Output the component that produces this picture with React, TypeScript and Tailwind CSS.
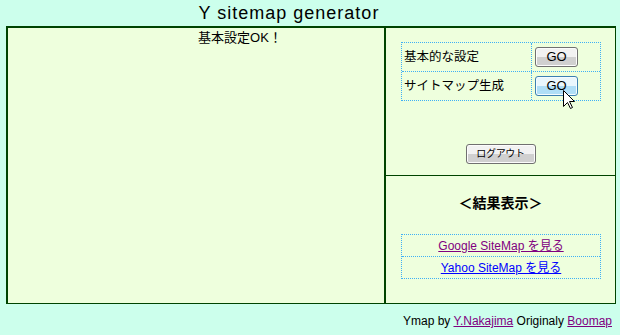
import React from "react";

const FONT = { fontFamily: '"Liberation Sans", "Noto Sans CJK JP", sans-serif' };

function GrayButton({ label, className = "" }: { label: string; className?: string }) {
  return (
    <div
      className={
        "flex items-center justify-center rounded-[3px] border border-[#707070] bg-gradient-to-b from-[#f2f2f2] from-50% to-[#d0d0d0] to-50% leading-[14px] text-black shadow-[inset_0_0_0_1px_#fcfcfc] " +
        className
      }
    >
      {label}
    </div>
  );
}

function BlueButton({ label, className = "" }: { label: string; className?: string }) {
  return (
    <div
      className={
        "flex items-center justify-center rounded-[3px] border border-[#3c7fb1] bg-gradient-to-b from-[#eaf6fd] from-50% to-[#b0def7] to-50% leading-[14px] text-black shadow-[inset_0_0_0_1px_#f4fbff] " +
        className
      }
    >
      {label}
    </div>
  );
}

export default function App() {
  return (
    <div className="relative w-[620px] h-[335px] bg-[#ccffec] text-black overflow-hidden" style={FONT}>
      <div className="h-[26px] leading-[26px] text-center pr-[42px] text-[18px] tracking-[1px]">
        Y sitemap generator
      </div>
      <div className="ml-[6px] w-[610px] h-[278px] flex bg-[#eeffdd] border-t-2 border-l-2 border-r border-b border-[#004400]">
        <div className="flex-1 pt-[3px] pl-[88px] text-center text-[13px] leading-[14px]">基本設定OK！</div>
        <div className="w-[2px] bg-[#004400]" />
        <div className="w-[229px] flex flex-col">
          <div className="h-[147px] flex flex-col items-start pt-[14px]">
            <div className="ml-[15px] w-[200px] border border-dotted border-[#3fb0f5] text-[12.5px] leading-[14px]">
              <div className="flex h-[28px]">
                <div className="w-[130px] flex items-center pl-[2px] border-r border-dotted border-[#3fb0f5]">基本的な設定</div>
                <div className="flex items-center pl-[3px]">
                  <GrayButton label="GO" className="w-[43px] h-[20px] text-[13px]" />
                </div>
              </div>
              <div className="flex h-[29px] border-t border-dotted border-[#3fb0f5]">
                <div className="w-[130px] flex items-center pl-[2px] border-r border-dotted border-[#3fb0f5]">サイトマップ生成</div>
                <div className="flex items-center pl-[3px]">
                  <BlueButton label="GO" className="w-[43px] h-[20px] text-[13px]" />
                </div>
              </div>
            </div>
            <div className="self-stretch flex justify-center mt-[43px]">
              <GrayButton label="ログアウト" className="w-[70px] h-[20px] text-[10px] tracking-[-0.3px]" />
            </div>
          </div>
          <div className="h-[1px] bg-[#004400]" />
          <div className="flex-1 flex flex-col">
            <div className="pt-[19px] text-center font-bold text-[14px] leading-[16px]">＜結果表示＞</div>
            <div className="mt-[23px] ml-[15px] w-[200px] border border-dotted border-[#3fb0f5] text-[12px] leading-[14px]">
              <div className="h-[21px] flex items-center justify-center">
                <a className="text-[#800080] underline">Google SiteMap を見る</a>
              </div>
              <div className="h-[22px] flex items-center justify-center border-t border-dotted border-[#3fb0f5]">
                <a className="text-[#0000ff] underline">Yahoo SiteMap を見る</a>
              </div>
            </div>
          </div>
        </div>
      </div>
      <div className="pt-[10px] pr-[8px] text-right text-[12px] leading-[14px]">
        Ymap by <a className="text-[#800080] underline">Y.Nakajima</a> Originaly{" "}
        <a className="text-[#800080] underline">Boomap</a>
      </div>
      <svg className="absolute left-[563px] top-[90px]" width="13" height="20" viewBox="0 0 13 20">
        <path
          d="M0.5 0.5 V16.5 L4.5 12.5 L7.5 18.5 L9.5 17.5 L6.5 11.5 H11.5 Z"
          fill="#ffffff"
          stroke="#000000"
          strokeWidth="1"
          strokeLinejoin="miter"
        />
      </svg>
    </div>
  );
}
